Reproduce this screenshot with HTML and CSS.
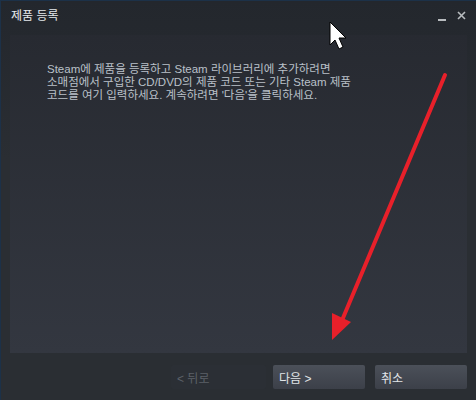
FILE: index.html
```html
<!DOCTYPE html>
<html lang="ko">
<head>
    <meta charset="UTF-8">
    <title>제품 등록</title>
    <link rel="stylesheet" href="styles.css">
</head>
<body>
    <div class="window">
        <div class="title-bar">
            <span class="title">제품 등록</span>
            <div class="controls">
                <span class="min"></span>
                <svg class="close" width="9" height="9" viewBox="0 0 9 9">
                    <path d="M1 1 L8 8 M8 1 L1 8" stroke="#b8bcbf" stroke-width="1.6"/>
                </svg>
            </div>
        </div>
        <div class="panel">
            <p class="intro">
                Steam에 제품을 등록하고 Steam 라이브러리에 추가하려면<br>
                소매점에서 구입한 CD/DVD의 제품 코드 또는 기타 Steam 제품<br>
                코드를 여기 입력하세요. 계속하려면 '다음'을 클릭하세요.
            </p>
        </div>
        <div class="footer">
            <button class="btn disabled">&lt; 뒤로</button>
            <button class="btn">다음 &gt;</button>
            <button class="btn cancel">취소</button>
        </div>
    </div>

    <svg class="overlay" width="476" height="400" viewBox="0 0 476 400">
        <line x1="445" y1="75" x2="343" y2="318" stroke="#e8202a" stroke-width="4" stroke-linecap="round"/>
        <polygon points="332,340 332,313 351,322" fill="#e8202a"/>
        <polygon points="330,22 330,45 335,40 339,49 343,47 339,38 346,38" fill="#fff" stroke="#000" stroke-width="1"/>
    </svg>
</body>
</html>
```

FILE: styles.css
```css
body {
    margin: 0;
    background: #2a2e33;
    font-family: "Liberation Sans", "Noto Sans CJK KR", Arial, sans-serif;
}
.window {
    width: 476px;
    height: 400px;
    box-sizing: border-box;
    border-top: 1px solid #1c3148;
    border-left: 1px solid #1c3148;
    background: linear-gradient(#23272d, #2a2e33 40%);
    display: flex;
    flex-direction: column;
    position: relative;
}
.title-bar {
    height: 34px;
    display: flex;
    justify-content: space-between;
    padding: 8px 10px 0 10px;
    box-sizing: border-box;
}
.title {
    color: #e6eaed;
    font-size: 12px;
    line-height: 14px;
}
.controls {
    display: flex;
    align-items: flex-start;
    gap: 11px;
    padding-top: 2px;
}
.min {
    width: 8px;
    height: 2px;
    background: #b8bcbf;
    margin-top: 8px;
}
.panel {
    margin: 0 9px;
    height: 318px;
    background: linear-gradient(#272a31, #333740);
    padding: 28px 0 0 37px;
    box-sizing: border-box;
}
.intro {
    margin: 0;
    color: #bac1c9;
    font-size: 11.5px;
    line-height: 13px;
}
.footer {
    display: flex;
    justify-content: flex-end;
    gap: 7px;
    padding: 12px 9px 0 0;
}
.btn {
    width: 92px;
    height: 24px;
    border: none;
    border-radius: 2px;
    padding: 0 0 0 6px;
    text-align: left;
    font-family: "Liberation Sans", "Noto Sans CJK KR", Arial, sans-serif;
    font-size: 12px;
    color: #e1e5e8;
    background: linear-gradient(#4b5059, #3c4049);
}
.btn.cancel {
    margin-left: 3px;
}
.btn.disabled {
    color: #5c6168;
    background: #2b2f35;
    width: 95px;
}
.overlay {
    position: absolute;
    left: 0;
    top: 0;
}
```
